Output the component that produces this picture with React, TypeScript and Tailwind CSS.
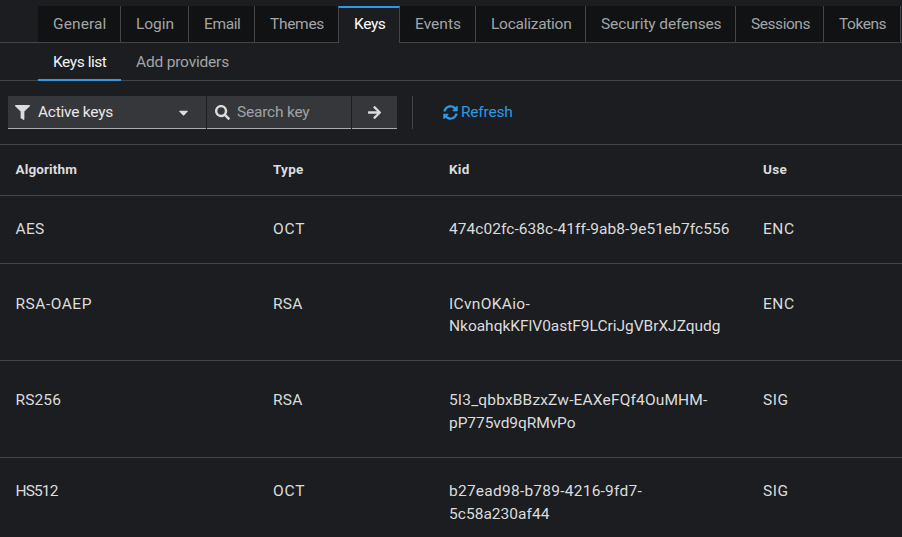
import { useLayoutEffect, useRef, useState } from "react";
import { FaFilter, FaCaretDown, FaSearch, FaArrowRight } from "react-icons/fa";

// Tracks a label out or in so that it occupies the given width.
function Label({ text, width, className = "" }: { text: string; width: number; className?: string }) {
  const ref = useRef<HTMLSpanElement>(null);
  const [spacing, setSpacing] = useState(0);
  useLayoutEffect(() => {
    const el = ref.current;
    if (!el) return;
    el.style.letterSpacing = "0px";
    const natural = el.getBoundingClientRect().width;
    const next = (width - natural) / text.length;
    el.style.letterSpacing = `${next}px`;
    setSpacing(next);
  }, [text, width]);
  return (
    <span ref={ref} className={`inline-block whitespace-nowrap ${className}`} style={{ letterSpacing: `${spacing}px` }}>
      {text}
    </span>
  );
}

const tabs = [
  { name: "General", text: 53.5, box: "w-[83px]" },
  { name: "Login", text: 38, box: "w-[68px]" },
  { name: "Email", text: 36.5, box: "w-[66px]" },
  { name: "Themes", text: 54, box: "w-[84px]" },
  { name: "Keys", text: 31.5, box: "w-[62px]" },
  { name: "Events", text: 46, box: "w-[76px]" },
  { name: "Localization", text: 80.5, box: "w-[110px]" },
  { name: "Security defenses", text: 120.5, box: "w-[150px]" },
  { name: "Sessions", text: 59, box: "w-[88px]" },
  { name: "Tokens", text: 47, box: "w-[77px]" },
];

type Line = [string, number];
const rows: { alg: Line; type: Line; kid: Line[]; use: Line; box: string }[] = [
  { alg: ["AES", 29], type: ["OCT", 32.5], kid: [["474c02fc-638c-41ff-9ab8-9e51eb7fc556", 280.5]], use: ["ENC", 31.5], box: "h-[68px] pt-[22px]" },
  { alg: ["RSA-OAEP", 76.5], type: ["RSA", 29.5], kid: [["ICvnOKAio-", 81], ["NkoahqkKFlV0astF9LCriJgVBrXJZqudg", 271.5]], use: ["ENC", 31.5], box: "h-[97px] pt-[29px] leading-[22px]" },
  { alg: ["RS256", 45.5], type: ["RSA", 29.5], kid: [["5I3_qbbxBBzxZw-EAXeFQf4OuMHM-", 258.5], ["pP775vd9qRMvPo", 126.5]], use: ["SIG", 25.5], box: "h-[97px] pt-[28px]" },
  { alg: ["HS512", 42], type: ["OCT", 32.5], kid: [["b27ead98-b789-4216-9fd7-", 193], ["5c58a230af44", 100.5]], use: ["SIG", 25.5], box: "h-[97px] pt-[22px]" },
];

const columns = "grid grid-cols-[257.5px_176px_314px_1fr] pl-[15.5px]";

export default function App() {
  return (
    <div className="h-[537px] w-[902px] overflow-hidden bg-[#1b1d21] font-['Roboto',sans-serif] text-[15.5px] leading-[23px] text-[#dcdcdc]">
      <nav className="flex h-[43px] pt-1.5">
        <div className="w-[38px] border-b border-[#444548]" />
        {tabs.map((t) =>
          t.name === "Keys" ? (
            <div key={t.name} className={`${t.box} -ml-px border-t-2 border-t-[#2b9ae6] border-x border-x-[#444548] pl-[15px] pt-[5px]`}>
              <Label text={t.name} width={t.text} className="text-white" />
            </div>
          ) : (
            <div key={t.name} className={`${t.box} shrink-0 border-r border-b border-[#444548] bg-[#101214] pl-[15px] pt-[7px] text-[#a3a5a7]`}>
              <Label text={t.name} width={t.text} />
            </div>
          ),
        )}
        <div className="flex-1 border-b border-[#444548]" />
      </nav>

      <nav className="flex h-[38px] border-b border-[#444548] pl-[38px]">
        <div className="h-[38px] w-[83px] border-b-2 border-[#3a9ade] pl-[15px] pt-2">
          <Label text="Keys list" width={53.5} className="text-[#f4f4f4]" />
        </div>
        <div className="pl-[15px] pt-2 text-[#a3a5a7]">
          <Label text="Add providers" width={93} />
        </div>
      </nav>

      <div className="flex h-[63px] pl-2 pt-[15px]">
        <div className="flex h-[33px] w-[198px] items-center border-b border-[#aaabac] bg-[#36373a] pl-[7px] pr-[15px]">
          <FaFilter size={15} />
          <Label text="Active keys" width={75} className="ml-2 text-[#e8e8e8]" />
          <FaCaretDown size={15} className="ml-auto" />
        </div>
        <div className="ml-px flex h-[33px] w-[144px] items-center border-b border-[#aaabac] bg-[#36373a] pl-2">
          <FaSearch size={15} />
          <Label text="Search key" width={72.5} className="ml-[7px] text-[#a0a2a5]" />
        </div>
        <div className="ml-px flex h-[33px] w-[45px] items-center justify-center border-b border-[#aaabac] bg-[#36373a]">
          <FaArrowRight size={15} />
        </div>
        <div className="ml-[15px] h-[33px] w-px bg-[#444548]" />
        <div className="ml-[30px] flex h-[33px] items-center text-[#2b9ae6]">
          <svg width="15" height="15" viewBox="0 0 512 512" fill="currentColor">
            <path d="M370.72 133.28C339.458 104.008 298.888 87.962 255.848 88c-77.458.068-144.328 53.178-162.791 126.85-1.344 5.363-6.122 9.15-11.651 9.15H24.103c-7.498 0-13.194-6.807-11.807-14.176C33.933 94.924 134.813 8 256 8c66.448 0 126.791 26.136 171.315 68.685L463.03 40.97C478.149 25.851 504 36.559 504 57.941V192c0 13.255-10.745 24-24 24H345.941c-21.382 0-32.09-25.851-16.971-40.971l41.75-41.749zM32 296h134.059c21.382 0 32.09 25.851 16.971 40.971l-41.75 41.75c31.262 29.273 71.835 45.319 114.876 45.28 77.418-.07 144.315-53.144 162.787-126.849 1.344-5.363 6.122-9.15 11.651-9.15h57.304c7.498 0 13.194 6.807 11.807 14.176C478.067 417.076 377.187 504 256 504c-66.448 0-126.791-26.136-171.315-68.685L48.97 471.03C33.851 486.149 8 475.441 8 454.059V320c0-13.255 10.745-24 24-24z" />
          </svg>
          <Label text="Refresh" width={51.5} className="ml-[3px]" />
        </div>
      </div>

      <div className={`${columns} h-[52px] border-y border-[#444548] pt-[13px] text-[13.5px] font-bold`}>
        <div><Label text="Algorithm" width={61.5} /></div>
        <div><Label text="Type" width={30.5} /></div>
        <div><Label text="Kid" width={20.5} /></div>
        <div><Label text="Use" width={24} /></div>
      </div>
      {rows.map((r) => (
        <div key={r.alg[0]} className={`${columns} ${r.box} border-b border-[#444548]`}>
          <div><Label text={r.alg[0]} width={r.alg[1]} /></div>
          <div><Label text={r.type[0]} width={r.type[1]} /></div>
          <div className="flex flex-col items-start">
            {r.kid.map(([text, width]) => <Label key={text} text={text} width={width} />)}
          </div>
          <div><Label text={r.use[0]} width={r.use[1]} /></div>
        </div>
      ))}
    </div>
  );
}
